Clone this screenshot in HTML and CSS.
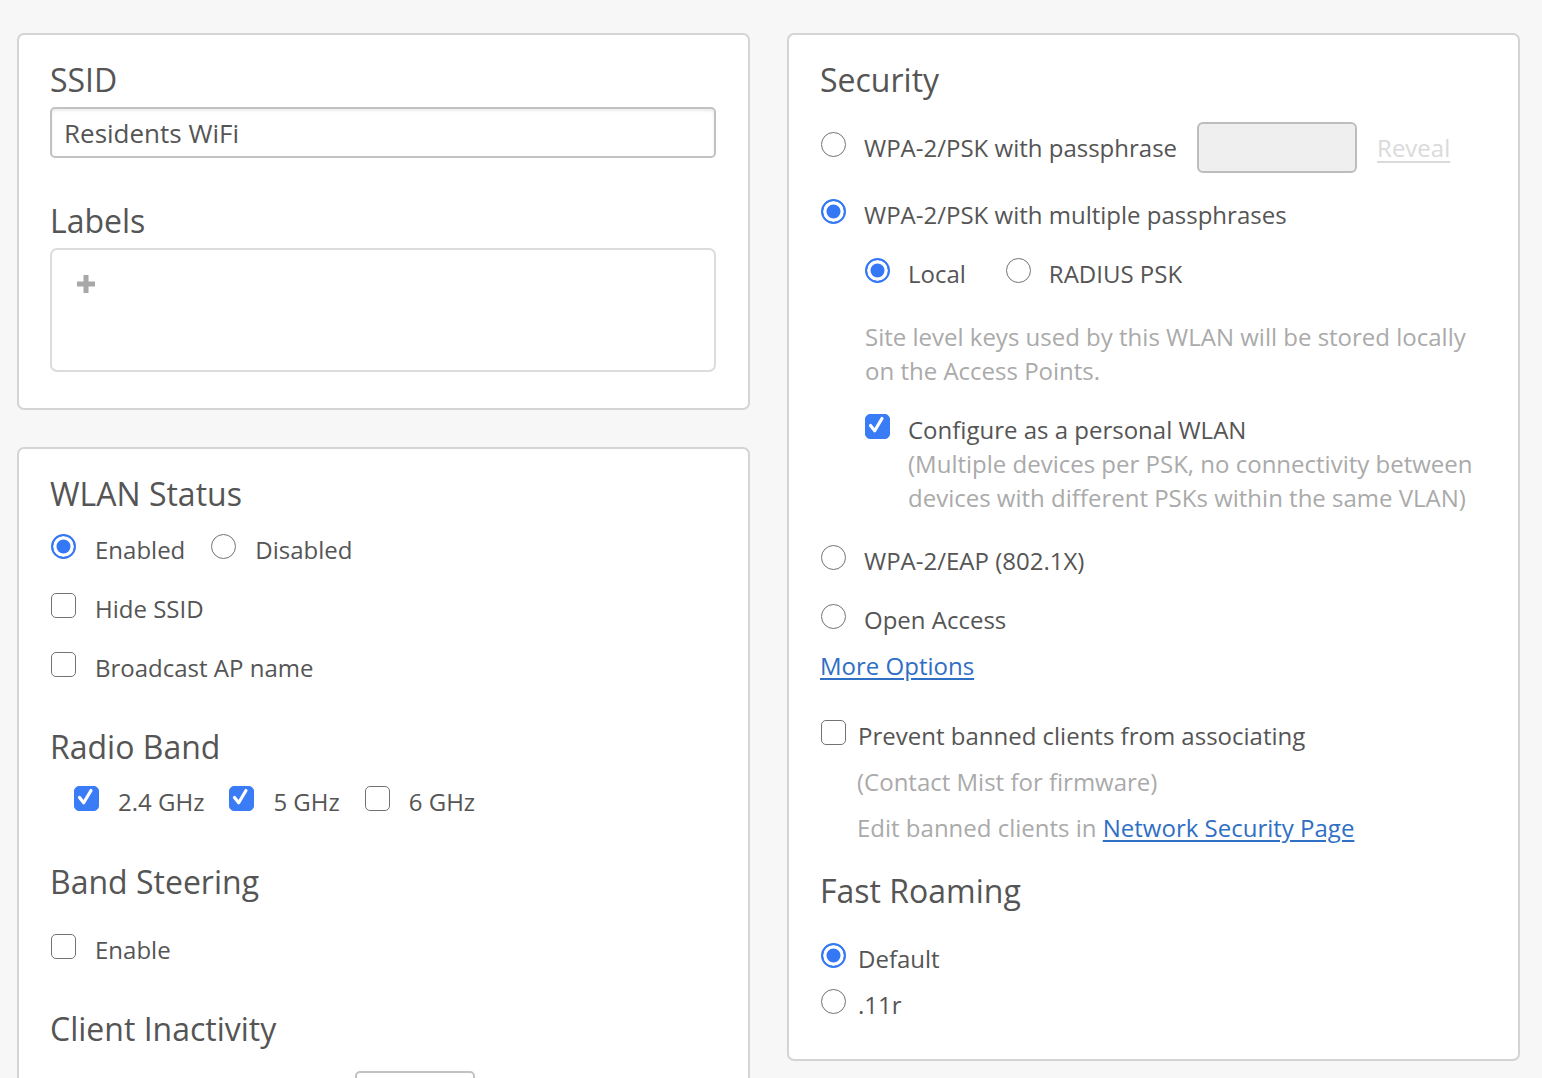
FILE: index.html
```html
<!DOCTYPE html>
<html lang="en">
<head>
<meta charset="utf-8">
<title>WLAN</title>
<link rel="stylesheet" href="styles.css">
</head>
<body>
<div class="page">
  <div class="col">
    <section class="card card-ssid">
      <h2 class="h">SSID</h2>
      <div class="text-input">Residents WiFi</div>
      <h2 class="h h-labels">Labels</h2>
      <div class="labels-box">
        <svg class="plus" width="18" height="18" viewBox="0 0 18 18"><path d="M9 0v18M0 9h18" stroke="#a8a8a8" stroke-width="5" fill="none"/></svg>
      </div>
    </section>
    <section class="card card-status">
      <h2 class="h">WLAN Status</h2>
      <div class="row r-enabled">
        <label class="opt"><span class="radio on"></span><span>Enabled</span></label>
        <label class="opt"><span class="radio"></span><span>Disabled</span></label>
      </div>
      <div class="row r-next"><span class="check"></span><span>Hide SSID</span></div>
      <div class="row r-next"><span class="check"></span><span>Broadcast AP name</span></div>
      <h2 class="h h-band">Radio Band</h2>
      <div class="row r-bands">
        <label class="opt"><span class="check on"><svg viewBox="0 0 25 25"><path d="M6.5 12.5l4.2 5.2L18 5.5" stroke="#fff" stroke-width="3.2" fill="none" stroke-linecap="round" stroke-linejoin="round"/></svg></span><span>2.4 GHz</span></label>
        <label class="opt"><span class="check on"><svg viewBox="0 0 25 25"><path d="M6.5 12.5l4.2 5.2L18 5.5" stroke="#fff" stroke-width="3.2" fill="none" stroke-linecap="round" stroke-linejoin="round"/></svg></span><span>5 GHz</span></label>
        <label class="opt"><span class="check"></span><span>6 GHz</span></label>
      </div>
      <h2 class="h h-steer">Band Steering</h2>
      <div class="row r-enable"><span class="check"></span><span>Enable</span></div>
      <h2 class="h h-gap">Client Inactivity</h2>
      <div class="small-input"></div>
    </section>
  </div>
  <div class="col">
    <section class="card card-security">
      <h2 class="h">Security</h2>
      <div class="row r-pass">
        <span class="radio"></span><span>WPA-2/PSK with passphrase</span>
        <div class="pass-input"></div>
        <a class="reveal">Reveal</a>
      </div>
      <div class="row r-multi"><span class="radio on"></span><span>WPA-2/PSK with multiple passphrases</span></div>
      <div class="row r-local">
        <label class="opt"><span class="radio on"></span><span>Local</span></label>
        <label class="opt"><span class="radio"></span><span>RADIUS PSK</span></label>
      </div>
      <p class="note">Site level keys used by this WLAN will be stored locally on the Access Points.</p>
      <div class="row r-personal">
        <span class="check on"><svg viewBox="0 0 25 25"><path d="M6.5 12.5l4.2 5.2L18 5.5" stroke="#fff" stroke-width="3.2" fill="none" stroke-linecap="round" stroke-linejoin="round"/></svg></span>
        <div class="personal-text">
          <div>Configure as a personal WLAN</div>
          <div class="muted">(Multiple devices per PSK, no connectivity between devices with different PSKs within the same VLAN)</div>
        </div>
      </div>
      <div class="row r-eap"><span class="radio"></span><span>WPA-2/EAP (802.1X)</span></div>
      <div class="row r-open"><span class="radio"></span><span>Open Access</span></div>
      <div class="more"><a class="link">More Options</a></div>
      <div class="row r-prevent"><span class="check"></span><span>Prevent banned clients from associating</span></div>
      <div class="sub muted">(Contact Mist for firmware)</div>
      <div class="sub muted">Edit banned clients in <a class="link">Network Security Page</a></div>
      <h2 class="h h-fast">Fast Roaming</h2>
      <div class="row r-default"><span class="radio on"></span><span>Default</span></div>
      <div class="row r-11r"><span class="radio"></span><span>.11r</span></div>
    </section>
  </div>
</div>
</body>
</html>
```
FILE: styles.css
```css
* { box-sizing: border-box; }
html, body { margin: 0; padding: 0; }
body {
  background: #f7f7f7;
  font-family: "Open Sans", "Liberation Sans", sans-serif;
  font-size: 24px;
  line-height: 34px;
  color: #555;
  overflow: hidden;
  height: 1078px;
}
.page {
  display: grid;
  grid-template-columns: 733px 733px;
  column-gap: 37px;
  padding: 33px 0 0 17px;
  align-items: start;
}
.col { display: flex; flex-direction: column; gap: 37px; }
.card {
  background: #fff;
  border: 2px solid #d4d4d4;
  border-radius: 7px;
  padding: 25px 32px 36px 32px;
}
.h {
  margin: 0 0 7px -1px;
  font-size: 32px;
  line-height: 40px;
  font-weight: 400;
  color: #555;
}
.h-labels { margin-top: 43px; }
.h-gap { margin-top: 42px; margin-bottom: 0; }
.h-band { margin-top: 42px; margin-bottom: 0; }
.h-steer { margin-top: 43px; margin-bottom: 0; }
.h-fast { margin-top: 26px; margin-bottom: 0; }

.text-input {
  height: 51px;
  border: 2px solid #c2c2c2;
  border-radius: 5px;
  padding: 6.5px 12px;
  box-shadow: inset 0 2px 3px rgba(0,0,0,0.08);
  color: #555;
  font-size: 26px;
  margin-left: -1px;
}
.labels-box {
  height: 124px;
  border: 2px solid #dcdcdc;
  border-radius: 7px;
  margin-left: -1px;
  padding: 25px 0 0 25px;
}
.plus { display: block; }

.card-status { padding-bottom: 100px; min-height: 700px; }

.row { display: flex; align-items: flex-start; }
.opt { display: flex; align-items: flex-start; }
.radio, .check {
  flex: none;
  width: 25px;
  height: 25px;
  margin-top: 1px;
  margin-right: 19px;
  border: 2px solid #737373;
  background: #fff;
}
.radio { border-radius: 50%; border-width: 1.8px; }
.radio.on {
  border: 2px solid #3478f6;
  background: #3478f6;
  box-shadow: inset 0 0 0 3.5px #fff;
}
.check { border-radius: 5px; border-width: 1.8px; }
.check.on { background: #3a7cf6; border-color: #3a7cf6; }
.check svg { display: block; margin: -2px; width: 25px; height: 25px; }

.r-enabled { margin-top: 19px; }
.r-enabled .opt + .opt { margin-left: 26px; }
.r-next { margin-top: 25px; }
.r-bands { margin-top: 18px; padding-left: 23px; }
.r-bands .opt + .opt { margin-left: 25px; }
.r-enable { margin-top: 31px; }
.small-input {
  margin-top: 22px;
  margin-left: 304px;
  width: 120px;
  height: 51px;
  border: 2px solid #c2c2c2;
  border-radius: 5px;
}

.card-security { padding-bottom: 37px; }
.card-security .radio, .card-security .check { margin-right: 18px; }
.r-pass { margin-top: 22px; align-items: center; height: 51px; }
.r-pass .radio { margin-top: 0; margin-bottom: 7px; }
.pass-input {
  width: 160px;
  height: 51px;
  margin-left: 20px;
  background: #efefef;
  border: 2px solid #bdbdbd;
  border-radius: 6px;
}
.reveal {
  margin-left: 20px;
  color: #dadada;
  text-decoration: underline;
  text-underline-offset: 4px;
}
.r-multi { margin-top: 25px; }
.r-local { margin-top: 25px; padding-left: 44px; }
.r-local .opt + .opt { margin-left: 40px; }
.note {
  margin: 29px 0 0 44px;
  color: #aaa;
}
.r-personal { margin-top: 25px; padding-left: 44px; }
.muted { color: #aaa; }
.r-eap { margin-top: 29px; }
.r-open { margin-top: 25px; }
.more { margin-top: 12px; margin-left: -1px; }
.link { color: #2f6fc4; text-decoration: underline; text-underline-offset: 3px; }
.r-prevent { margin-top: 36px; }
.card-security .r-prevent .check { margin-right: 12px; }
.sub { margin-top: 12px; padding-left: 36px; }
.r-default { margin-top: 31px; }
.r-11r { margin-top: 12px; }
.r-default .radio, .r-11r .radio { margin-right: 12px; }
```
